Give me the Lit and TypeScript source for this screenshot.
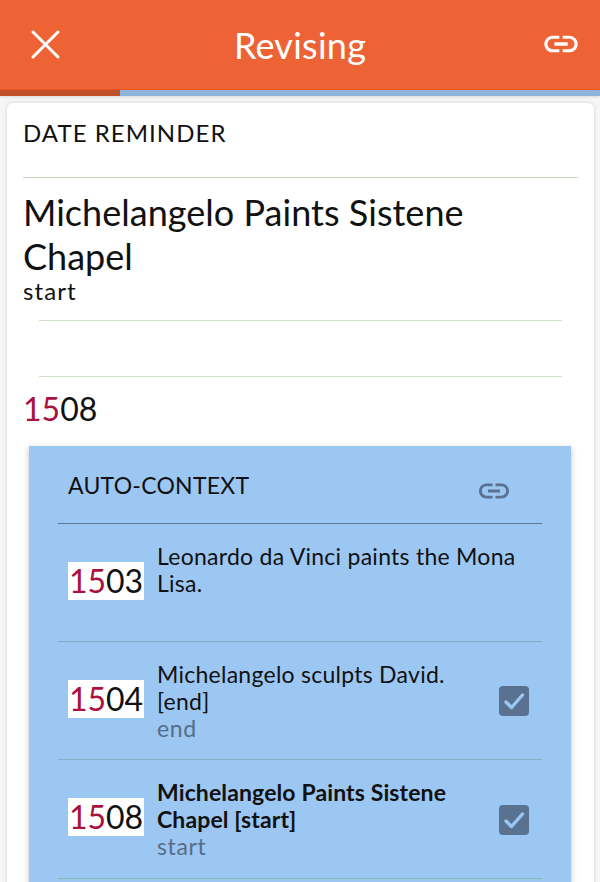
import { LitElement, html, css } from "lit";
import { customElement } from "lit/decorators.js";

const linkIcon = (cls: string) => html`<svg class=${cls} viewBox="0 0 24 24" fill="currentColor"><path d="M3.9 12c0-1.71 1.39-3.1 3.1-3.1h4V7H7c-2.76 0-5 2.24-5 5s2.24 5 5 5h4v-1.9H7c-1.71 0-3.1-1.39-3.1-3.1zM8 13h8v-2H8v2zm9-6h-4v1.9h4c1.71 0 3.1 1.39 3.1 3.1s-1.39 3.1-3.1 3.1h-4V17h4c2.76 0 5-2.24 5-5s-2.24-5-5-5z"/></svg>`;

const checkbox = html`<svg class="check" viewBox="0 0 30 30"><rect width="30" height="30" rx="4" fill="#5a7291"/><path d="M7 16l5.5 5.5L23.5 9" fill="none" stroke="#9cc7f2" stroke-width="3.4" stroke-linecap="round" stroke-linejoin="round"/></svg>`;

const year = (y: string) => html`<span class="red">${y.slice(0, 2)}</span>${y.slice(2)}`;

@customElement("app-root")
export class AppRoot extends LitElement {
  static styles = css`
    :host { display: block; height: 882px; overflow: hidden; background: #f6f6f6; font-family: Lato, sans-serif; color: #111; }
    * { box-sizing: border-box; }
    .header { height: 90px; background: #ee6336; border-bottom: 1px solid #f0581f; display: grid; grid-template-columns: 1fr auto 1fr; align-items: center; padding: 0 21px; color: #fff; }
    .title { font-size: 36px; line-height: 40px; letter-spacing: 0.25px; }
    .close { width: 42px; height: 42px; margin-left: 3px; }
    .hlink { width: 40px; height: 40px; margin: 0 -2px 1px 0; justify-self: end; }
    .progress { height: 6px; background: #8fb4dc; box-shadow: 0 1px 3px rgba(0,0,0,.12); }
    .progress div { width: 120px; height: 100%; background: #c0502b; }
    .card { margin: 7px 6px 0 7px; background: #fff; border-radius: 6px 6px 0 0; box-shadow: 0 0 4px rgba(0,0,0,.14); padding: 15px 16px 0; height: 800px; }
    .kicker { font-size: 24px; line-height: 29px; letter-spacing: 1.05px; height: 60px; border-bottom: 1px solid #c9d8c4; }
    .main { font-size: 36px; line-height: 44px; margin-top: 12px; max-width: 520px; letter-spacing: 0.03px; }
    .sub { font-size: 24px; line-height: 26px; letter-spacing: 1.1px; }
    .rule { height: 1px; background: #cfe3c6; margin: 0 16px; }
    .r1 { margin-top: 16px; }
    .r2 { margin-top: 55px; }
    .date { font-size: 32px; line-height: 38px; margin-top: 13px; }
    .red { color: #a8123f; }
    .auto { margin: 18px 7px 0 6px; background: #9cc7f2; box-shadow: 0 2px 6px rgba(0,0,0,.25); padding: 0 29px; height: 500px; }
    .auto-head { height: 78px; border-bottom: 1px solid #5f7a98; display: flex; align-items: center; justify-content: space-between; padding: 0 30px 0 10px; font-size: 23px; letter-spacing: 0.25px; }
    .alink { width: 36px; height: 36px; color: #5a7291; margin-top: 13px; }
    .row { display: flex; align-items: center; border-bottom: 1px solid #86b2c8; height: 118px; padding: 0 13px 0 10px; }
    .row.first { border-color: #86a8c8; align-items: flex-start; padding-top: 38px; }
    .row.last { height: 119px; border-color: #86bcb8; }
    .yr { flex: none; width: 76px; height: 38px; background: #fff; font-size: 32px; line-height: 38px; text-align: center; margin-top: -4px; }
    .first .yr { margin-top: 0; }
    .txt { flex: 1; padding: 0 30px 0 13px; font-size: 23px; line-height: 27px; letter-spacing: 0.26px; margin-top: 1px; }
    .first .txt { margin-top: -19px; padding-right: 0; }
    .note { color: #566d87; letter-spacing: 0.6px; }
    b { font-weight: 700; letter-spacing: 0.12px; }
    .check { width: 30px; height: 30px; flex: none; margin-top: 1px; }
  `;

  render() {
    return html`
      <div class="header">
        <svg class="close" viewBox="0 0 42 42"><path d="M9 8l25 25M34 8L9 33" stroke="#fff" stroke-width="3" stroke-linecap="round"/></svg>
        <div class="title">Revising</div>
        ${linkIcon("hlink")}
      </div>
      <div class="progress"><div></div></div>
      <div class="card">
        <div class="kicker">DATE REMINDER</div>
        <div class="main">Michelangelo Paints Sistene Chapel</div>
        <div class="sub">start</div>
        <div class="rule r1"></div>
        <div class="rule r2"></div>
        <div class="date">${year("1508")}</div>
        <div class="auto">
          <div class="auto-head"><span>AUTO-CONTEXT</span>${linkIcon("alink")}</div>
          <div class="row first">
            <div class="yr">${year("1503")}</div>
            <div class="txt">Leonardo da Vinci paints the Mona Lisa.</div>
          </div>
          <div class="row">
            <div class="yr">${year("1504")}</div>
            <div class="txt">Michelangelo sculpts David. [end]<div class="note">end</div></div>
            ${checkbox}
          </div>
          <div class="row last">
            <div class="yr">${year("1508")}</div>
            <div class="txt"><b>Michelangelo Paints Sistene Chapel [start]</b><div class="note">start</div></div>
            ${checkbox}
          </div>
        </div>
      </div>
    `;
  }
}
